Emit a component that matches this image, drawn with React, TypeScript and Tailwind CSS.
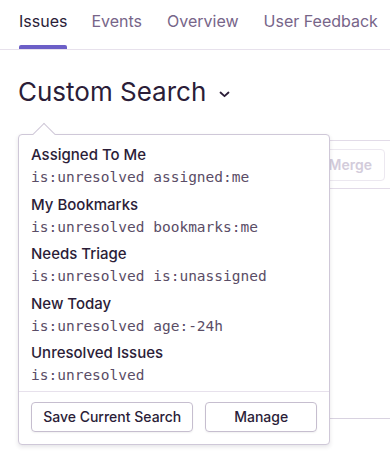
import React from "react";

const items = [
  { title: "Assigned To Me", query: "is:unresolved assigned:me" },
  { title: "My Bookmarks", query: "is:unresolved bookmarks:me" },
  { title: "Needs Triage", query: "is:unresolved is:unassigned" },
  { title: "New Today", query: "is:unresolved age:-24h" },
  { title: "Unresolved Issues", query: "is:unresolved" },
];

export default function App() {
  return (
    <div className="relative w-[390px] h-[454px] overflow-hidden bg-white text-[#2b1d38]" style={{ fontFamily: "Inter, 'Noto Sans', sans-serif" }}>
      <nav className="flex h-[50px] border-b border-[#e7e1ec] pl-[19px]">
        <div className="flex flex-col justify-between">
          <span className="pt-[10px] text-[16px] leading-[22px] text-[#2b1d38]">Issues</span>
          <span className="h-[4px] bg-[#6c5fc7] rounded-t-[2px]" />
        </div>
        <span className="ml-[24px] pt-[10px] text-[16px] leading-[22px] text-[#776589]">Events</span>
        <span className="ml-[25px] pt-[10px] text-[16px] leading-[22px] text-[#776589]">Overview</span>
        <span className="ml-[25px] pt-[10px] text-[16px] leading-[22px] text-[#776589] whitespace-nowrap">User Feedback</span>
      </nav>

      <div className="flex items-center gap-[13px] pl-[18px] pt-[26px] h-[82px] items-start">
        <h1 className="text-[26px] leading-[32px] font-normal text-[#2b1d38]">Custom Search</h1>
        <svg width="11" height="7" viewBox="0 0 11 7" className="mt-[15px]">
          <path d="M1.5 1.5 L5.5 5.2 L9.5 1.5" fill="none" stroke="#2b1d38" strokeWidth="1.8" strokeLinecap="round" strokeLinejoin="round" />
        </svg>
      </div>

      <div className="mt-[8px] ml-[18px] h-[49px] border-y border-[#e2dbe8] flex justify-end items-center pr-[5px]">
        <div className="h-[32px] px-[12px] flex items-center border border-[#ece8f0] rounded-[4px] text-[14px] font-semibold text-[#d3ccdb]">Merge</div>
      </div>
      <div className="mt-[229px] ml-[18px] h-px bg-[#d8d2e0]" />

      <div className="absolute left-[18px] top-[134px] w-[312px] rounded-[4px] border border-[#cfc8d8] bg-white shadow-[0_2px_4px_rgba(43,29,56,0.12)]">
        <div className="absolute -top-[9px] left-[17px] w-[16px] h-[16px] rotate-45 border-l border-t border-[#cfc8d8] bg-white" />
        <div className="relative pt-[9px]">
          {items.map((it) => (
            <div key={it.title} className="px-[12px] pb-[4px] h-[49.6px]">
              <div className="text-[15px] leading-[22px] font-medium text-[#2b1d38]">{it.title}</div>
              <div className="text-[14.5px] leading-[23px] text-[#5a4d66]" style={{ fontFamily: "'DejaVu Sans Mono', monospace" }}>{it.query}</div>
            </div>
          ))}
        </div>
        <div className="flex gap-[12px] border-t border-[#e7e1ec] px-[12px] pt-[10px] pb-[12px] -mt-[1px]">
          <button className="h-[30px] w-[163px] rounded-[4px] border border-[#c6becf] text-[14px] font-medium text-[#2b1d38] shadow-[0_1px_2px_rgba(0,0,0,0.06)]">Save Current Search</button>
          <button className="h-[30px] w-[112px] rounded-[4px] border border-[#c6becf] text-[14px] font-medium text-[#2b1d38] shadow-[0_1px_2px_rgba(0,0,0,0.06)]">Manage</button>
        </div>
      </div>
    </div>
  );
}
